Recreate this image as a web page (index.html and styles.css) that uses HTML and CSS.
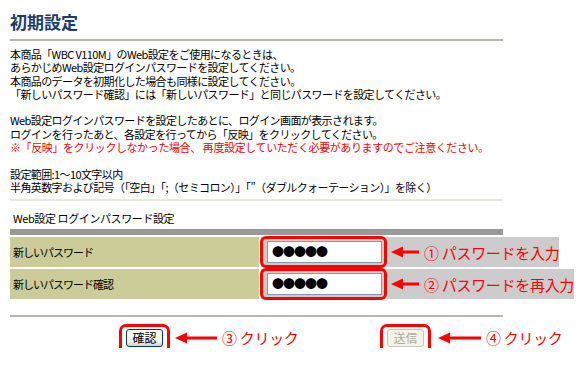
FILE: index.html
```html
<!DOCTYPE html>
<html lang="ja">
<head>
  <meta charset="UTF-8" />
  <title>初期設定</title>
  <link rel="stylesheet" href="styles.css">
</head>
<body>
  <div class="page">
    <h1 class="title">初期設定</h1>
    <div class="rule"></div>

    <div class="intro">
      <p>本商品「WBC V110M」のWeb設定をご使用になるときは、<br>あらかじめWeb設定ログインパスワードを設定してください。<br>本商品のデータを初期化した場合も同様に設定してください。<br>「新しいパスワード確認」には「新しいパスワード」と同じパスワードを設定してください。</p>
      <p>Web設定ログインパスワードを設定したあとに、ログイン画面が表示されます。<br>ログインを行ったあと、各設定を行ってから「反映」をクリックしてください。<br><span class="warn">※「反映」をクリックしなかった場合、 再度設定していただく必要がありますのでご注意ください。</span></p>
      <p>設定範囲:1～10文字以内<br>半角英数字および記号（「空白」「;（セミコロン）」「”（ダブルクォーテーション）」を除く）</p>
    </div>

    <div class="rule rule-light"></div>

    <div class="settings">
      <div class="caption">Web設定 ログインパスワード設定</div>
      <div class="bar"></div>
      <div class="row">
        <div class="label">新しいパスワード</div>
        <div class="value">
          <span class="ring ring-field"><span class="pw">●●●●●</span></span>
          <svg class="arrow" width="28" height="12" viewBox="0 0 28 12"><polygon points="0,6 12,0.5 12,4.5 28,4.5 28,7.5 12,7.5 12,11.5" fill="#f00"/></svg>
          <span class="note">① パスワードを入力</span>
        </div>
      </div>
      <div class="row">
        <div class="label">新しいパスワード確認</div>
        <div class="value">
          <span class="ring ring-field"><span class="pw">●●●●●</span></span>
          <svg class="arrow" width="28" height="12" viewBox="0 0 28 12"><polygon points="0,6 12,0.5 12,4.5 28,4.5 28,7.5 12,7.5 12,11.5" fill="#f00"/></svg>
          <span class="note">② パスワードを再入力</span>
        </div>
      </div>
    </div>

    <div class="rule rule-bottom"></div>

    <div class="actions">
      <div class="act act-confirm">
        <span class="ring ring-btn"><button class="btn" type="button">確認</button></span>
        <svg class="arrow arrow-long" width="42" height="12" viewBox="0 0 42 12"><polygon points="0,6 12,0.5 12,4.5 42,4.5 42,7.5 12,7.5 12,11.5" fill="#f00"/></svg>
        <span class="note">③ クリック</span>
      </div>
      <div class="act act-send">
        <span class="ring ring-btn"><button class="btn" type="button" disabled>送信</button></span>
        <svg class="arrow arrow-long arrow-send" width="43" height="12" viewBox="0 0 43 12"><polygon points="0,6 12,0.5 12,4.5 43,4.5 43,7.5 12,7.5 12,11.5" fill="#f00"/></svg>
        <span class="note">④ クリック</span>
      </div>
    </div>
  </div>
</body>
</html>
```

FILE: styles.css
```css
body {
  margin: 0;
  background: #ffffff;
  color: #000000;
  font-family: "Noto Sans CJK JP", "Noto Sans", sans-serif;
  font-size: 11px;
}
.page {
  width: 493px;
  padding: 12px 0 0 10px;
}
.title {
  margin: 0;
  font-size: 17px;
  line-height: 20px;
  font-weight: bold;
  color: #1b3d6f;
}
.rule {
  height: 2px;
  margin-top: 7px;
  background: #bbb8a8;
}
.rule-light {
  margin-top: 5px;
  background: #ebe9dc;
}
.rule-bottom {
  margin-top: 16px;
}
.intro {
  margin-top: 7px;
  letter-spacing: -0.6px;
}
.intro p {
  margin: 0 0 13.3px;
  line-height: 13.3px;
  white-space: nowrap;
}
.intro p:last-child {
  margin-bottom: 0;
}
.warn {
  color: #ff0000;
  letter-spacing: -0.4px;
}

/* パスワード設定テーブル */
.settings {
  margin-top: 10px;
}
.caption {
  padding-left: 3px;
  line-height: 14px;
  letter-spacing: -0.4px;
}
.bar {
  height: 6px;
  margin-top: 4px;
  background: #999999;
}
.row {
  display: grid;
  grid-template-columns: 249px 1fr;
  column-gap: 2px;
  height: 30px;
  margin-top: 2px;
}
.label {
  display: flex;
  align-items: center;
  padding-left: 3px;
  background: #cccc99;
  letter-spacing: -1px;
}
.value {
  display: flex;
  align-items: center;
  padding-left: 6px;
  background: #cccccc;
  white-space: nowrap;
}
.pw {
  display: block;
  width: 109px;
  height: 20px;
  padding-left: 4px;
  border: 1px solid #7f9db9;
  background: #ffffff;
  font-size: 12px;
  line-height: 20px;
  letter-spacing: -1px;
}

/* 赤い囲み */
.ring {
  position: relative;
  display: block;
}
.ring::after {
  content: "";
  position: absolute;
  border: 3px solid #ff0000;
  border-radius: 6px;
}
.ring-field::after {
  left: -7px;
  right: -5px;
  top: -5px;
  bottom: -5px;
}
.ring-btn::after {
  left: -7px;
  right: -7px;
  top: -5px;
  bottom: -7px;
  border-radius: 7px;
}
.arrow {
  display: block;
  flex: none;
  margin-left: 9px;
}
.arrow-long {
  margin-left: 12px;
}
.arrow-send {
  margin-left: 14px;
}
.note {
  margin-left: 5px;
  color: #ff0000;
  font-size: 15px;
  white-space: nowrap;
  letter-spacing: -0.3px;
}

/* ボタン */
.actions {
  display: grid;
  grid-template-columns: 377px 1fr;
  margin-top: 10px;
}
.act {
  display: flex;
  align-items: center;
}
.act-confirm {
  padding-left: 116px;
}
.btn {
  display: block;
  width: 37px;
  height: 18px;
  padding: 0;
  border: 1px solid #003c74;
  border-radius: 3px;
  background: linear-gradient(#ffffff, #f2f1ea 70%, #d8d3c6);
  font-family: inherit;
  font-size: 12px;
  line-height: 16px;
  color: #000000;
}
.btn:disabled {
  border-color: #c9c7ba;
  background: #f5f4ea;
  color: #aca899;
}
```
